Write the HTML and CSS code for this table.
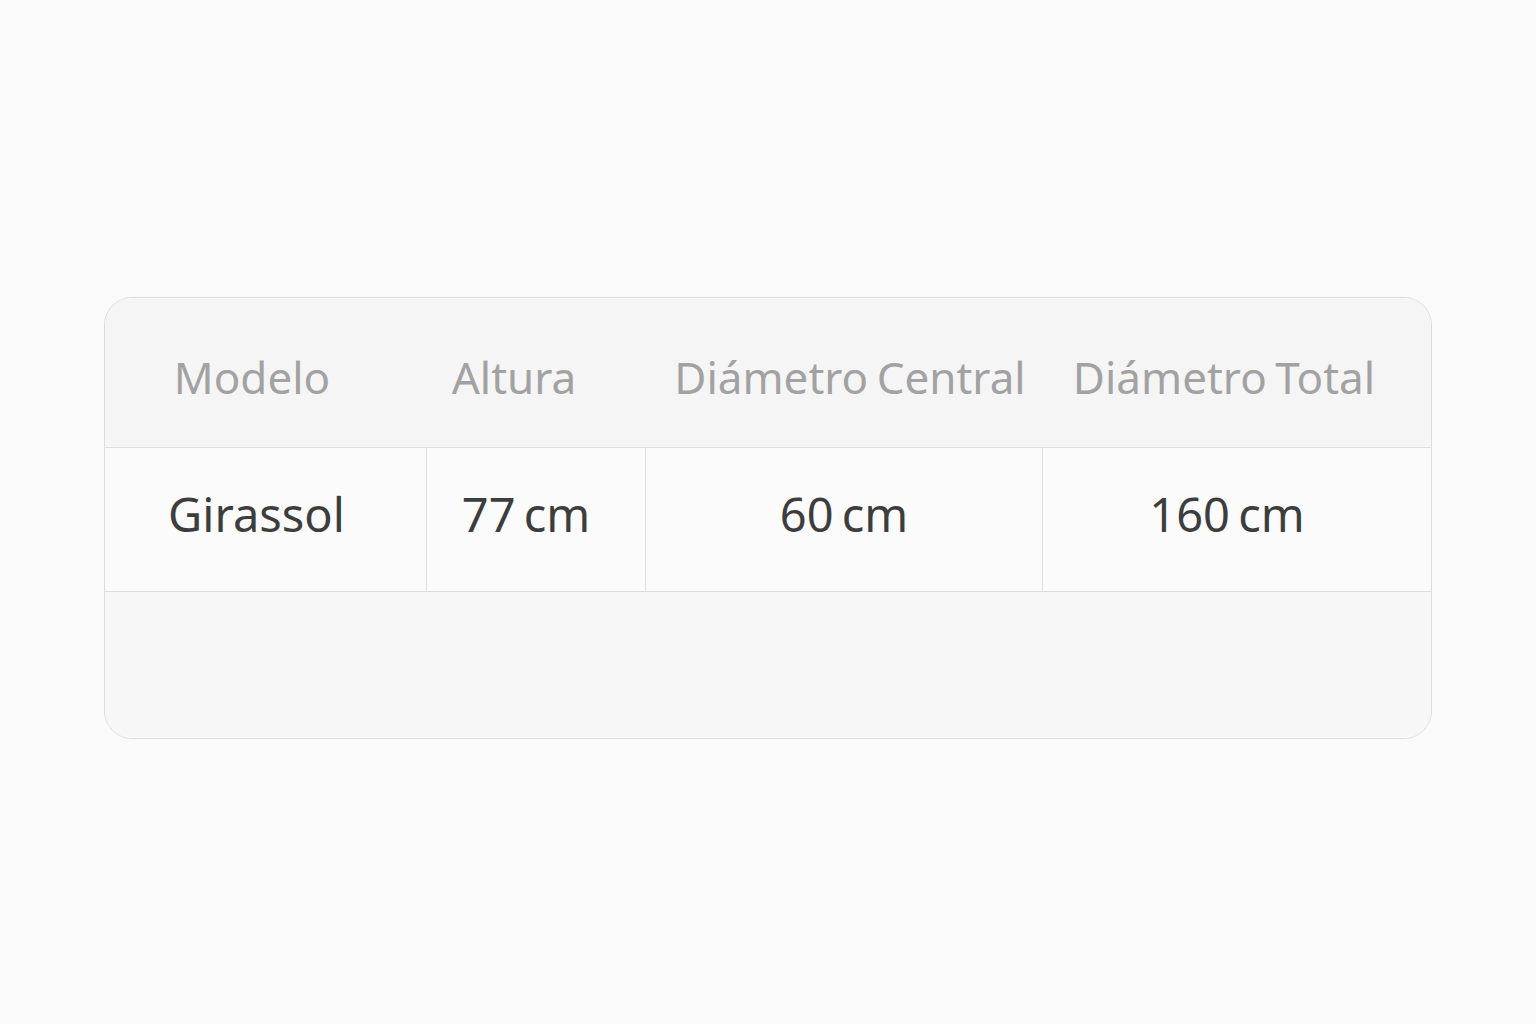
FILE: index.html
```html
<!DOCTYPE html>
<html lang="pt">
<head>
<meta charset="utf-8">
<title>Tabela</title>
<link rel="stylesheet" href="styles.css">
</head>
<body>
<main class="page">
  <section class="card">
    <div class="head">
      <div class="hcell">Modelo</div>
      <div class="hcell">Altura</div>
      <div class="hcell">Diámetro Central</div>
      <div class="hcell">Diámetro Total</div>
    </div>
    <div class="row">
      <div class="cell c1">Girassol</div>
      <div class="cell c2">77 cm</div>
      <div class="cell c3">60 cm</div>
      <div class="cell c4">160 cm</div>
    </div>
    <div class="foot"></div>
  </section>
</main>
</body>
</html>
```
FILE: styles.css
```css
html, body {
  margin: 0;
  padding: 0;
  background: #fbfafb;
}
body {
  font-family: "Noto Sans", "Liberation Sans", sans-serif;
}
.page {
  width: 1536px;
  height: 1024px;
  padding-top: 297px;
  padding-left: 104px;
  box-sizing: border-box;
}
.card {
  width: 1328px;
  height: 442px;
  box-sizing: border-box;
  border: 1px solid #dddcdd;
  border-radius: 28px;
  overflow: hidden;
  display: flex;
  flex-direction: column;
  background: #f8f7f8;
}
.head {
  height: 150px;
  flex: none;
  display: grid;
  grid-template-columns: 294px 230px 442px 306px 1fr;
  align-items: center;
  background: #f6f5f6;
  border-bottom: 1px solid #dedede;
  box-sizing: border-box;
}
.hcell {
  text-align: center;
  font-size: 44px;
  color: #a2a2a2;
  white-space: nowrap;
  padding-top: 8px;
  word-spacing: -3px;
}
.row {
  height: 144px;
  flex: none;
  display: grid;
  grid-template-columns: 322px 219px 397px 1fr;
  background: #fbfbfb;
  border-bottom: 1px solid #dedede;
  box-sizing: border-box;
}
.cell {
  display: flex;
  align-items: center;
  justify-content: center;
  font-size: 47px;
  color: #3d3d3d;
  border-right: 1px solid #e0e0e0;
  white-space: nowrap;
  padding-bottom: 12px;
  word-spacing: -4px;
}
.cell.c4 { border-right: none; }
.c1 { padding-right: 18px; }
.c2 { padding-right: 20px; }
.c4 { padding-right: 20px; }
.foot {
  flex: 1;
  background: #f8f7f8;
}
```
